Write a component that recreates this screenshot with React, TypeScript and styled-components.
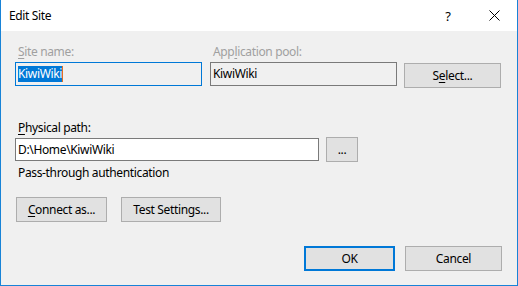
import React from 'react';
import styled, { createGlobalStyle } from 'styled-components';

const GlobalStyle = createGlobalStyle`
    html, body {
        margin: 0;
        padding: 0;
        background: #ffffff;
    }
    body {
        font-family: 'Noto Sans', 'Liberation Sans', sans-serif;
        font-size: 12px;
        letter-spacing: -0.35px;
        color: #000;
    }
`;

const Window = styled.div`
    width: 518px;
    height: 286px;
    box-sizing: border-box;
    border: 1px solid #1883d7;
    border-top: none;
    display: flex;
    flex-direction: column;
    background: #f0f0f0;
`;

const TitleBar = styled.div`
    height: 31px;
    flex: none;
    display: flex;
    align-items: center;
    background: #fff;
    padding-left: 8px;
`;

const Title = styled.div`
    flex: 1;
    line-height: 16px;
`;

const CaptionButton = styled.div`
    width: 46px;
    height: 31px;
    display: flex;
    align-items: center;
    justify-content: center;
    font-size: 13px;
`;

const Body = styled.div`
    flex: 1;
    display: flex;
    flex-direction: column;
    padding: 13px 15px 14px 14px;
`;

const TopRow = styled.div`
    display: flex;
    align-items: flex-start;
    gap: 8px;
`;

const Field = styled.div`
    display: flex;
    flex-direction: column;
    gap: 2px;
`;

const Label = styled.label<{ $disabled?: boolean }>`
    display: block;
    line-height: 16px;
    padding-left: 3px;
    color: ${(p) => (p.$disabled ? '#a0a0a0' : '#000')};
    u {
        text-decoration-thickness: 1px;
        text-underline-offset: 2px;
    }
`;

const TextBox = styled.div<{ $width: number; $height?: number; $focused?: boolean; $readonly?: boolean }>`
    width: ${(p) => p.$width}px;
    height: ${(p) => p.$height ?? 24}px;
    box-sizing: border-box;
    border: 1px solid ${(p) => (p.$focused ? '#0078d7' : '#7a7a7a')};
    background: ${(p) => (p.$readonly ? '#f0f0f0' : '#fff')};
    display: flex;
    align-items: center;
    padding-left: 2px;
    line-height: 16px;
`;

const Selected = styled.span`
    background: #0078d7;
    color: #fff;
    border-right: 1px solid #e07020;
`;

const Button = styled.div<{ $width: number; $default?: boolean }>`
    width: ${(p) => p.$width}px;
    height: 25px;
    box-sizing: border-box;
    border: ${(p) => (p.$default ? '2px solid #0078d7' : '1px solid #adadad')};
    background: #e1e1e1;
    display: flex;
    align-items: center;
    justify-content: center;
    line-height: 16px;
    flex: none;
    u {
        text-decoration-thickness: 1px;
        text-underline-offset: 2px;
    }
`;

const SelectButton = styled(Button)`
    margin-top: 19px;
    margin-left: -1px;
`;

const PathLabel = styled(Label)`
    margin-top: 32px;
    margin-bottom: 1px;
`;

const PathRow = styled.div`
    display: flex;
    align-items: center;
    gap: 7px;
    height: 25px;
`;

const Note = styled.div`
    margin-top: 3px;
    padding-left: 3px;
    line-height: 16px;
`;

const ButtonRow = styled.div<{ $end?: boolean }>`
    display: flex;
    justify-content: ${(p) => (p.$end ? 'flex-end' : 'flex-start')};
    gap: ${(p) => (p.$end ? 10 : 14)}px;
`;

const ActionRow = styled(ButtonRow)`
    margin-top: 16px;
    padding-left: 1px;
`;

const Footer = styled(ButtonRow)`
    margin-top: auto;
`;

const CloseIcon = () => (
    <svg width="11" height="11" viewBox="0 0 11 11">
        <path d="M0.5 0.5 L10.5 10.5 M10.5 0.5 L0.5 10.5" stroke="#000" strokeWidth="1" fill="none" />
    </svg>
);

const EditSite: React.FC = () => {
    return (
        <Window>
            <TitleBar>
                <Title>Edit Site</Title>
                <CaptionButton>?</CaptionButton>
                <CaptionButton>
                    <CloseIcon />
                </CaptionButton>
            </TitleBar>
            <Body>
                <TopRow>
                    <Field>
                        <Label $disabled>
                            <u>S</u>ite name:
                        </Label>
                        <TextBox $width={187} $focused $readonly>
                            <Selected>KiwiWiki</Selected>
                        </TextBox>
                    </Field>
                    <Field>
                        <Label $disabled>
                            App<u>l</u>ication pool:
                        </Label>
                        <TextBox $width={187} $readonly>
                            KiwiWiki
                        </TextBox>
                    </Field>
                    <SelectButton $width={97}>
                        <span>
                            S<u>e</u>lect...
                        </span>
                    </SelectButton>
                </TopRow>
                <PathLabel>
                    <u>P</u>hysical path:
                </PathLabel>
                <PathRow>
                    <TextBox $width={304} $height={23}>
                        D:\Home\KiwiWiki
                    </TextBox>
                    <Button $width={32}>...</Button>
                </PathRow>
                <Note>Pass-through authentication</Note>
                <ActionRow>
                    <Button $width={91}>
                        <span>
                            <u>C</u>onnect as...
                        </span>
                    </Button>
                    <Button $width={100}>Test Settings...</Button>
                </ActionRow>
                <Footer $end>
                    <Button $width={91} $default>
                        OK
                    </Button>
                    <Button $width={97}>Cancel</Button>
                </Footer>
            </Body>
        </Window>
    );
};

const App: React.FC = () => (
    <>
        <GlobalStyle />
        <EditSite />
    </>
);

export default App;
